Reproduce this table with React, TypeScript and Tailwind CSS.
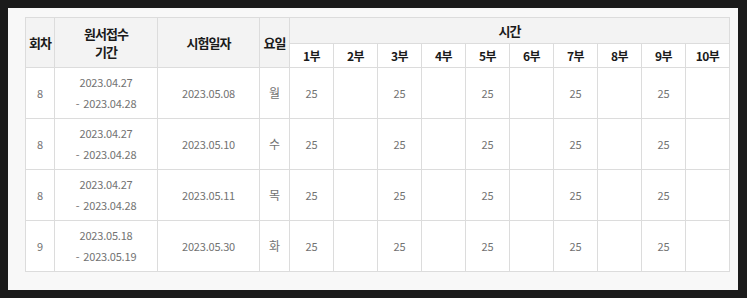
type Row = {
  round: string;
  applyFrom: string;
  applyTo: string;
  examDate: string;
  day: string;
  slots: (number | null)[];
};

const rows: Row[] = [
  { round: "8", applyFrom: "2023.04.27", applyTo: "2023.04.28", examDate: "2023.05.08", day: "월", slots: [25, null, 25, null, 25, null, 25, null, 25, null] },
  { round: "8", applyFrom: "2023.04.27", applyTo: "2023.04.28", examDate: "2023.05.10", day: "수", slots: [25, null, 25, null, 25, null, 25, null, 25, null] },
  { round: "8", applyFrom: "2023.04.27", applyTo: "2023.04.28", examDate: "2023.05.11", day: "목", slots: [25, null, 25, null, 25, null, 25, null, 25, null] },
  { round: "9", applyFrom: "2023.05.18", applyTo: "2023.05.19", examDate: "2023.05.30", day: "화", slots: [25, null, 25, null, 25, null, 25, null, 25, null] },
];

const parts = ["1부", "2부", "3부", "4부", "5부", "6부", "7부", "8부", "9부", "10부"];

const thClass = "border border-[#dcdcdc] bg-[#f3f3f3] p-0 text-center text-[13px] font-bold tracking-[-1px] text-[#1a1a1a]";
const tdClass = "border border-[#dcdcdc] bg-white p-0 text-center text-[11px] font-normal tracking-[-0.2px] text-[#727272]";

export default function App() {
  return (
    <main
      className="min-h-screen bg-[#1b1b1b] pt-2 pl-2"
      style={{ fontFamily: '"Noto Sans CJK KR", "Noto Sans", sans-serif' }}
    >
      <div className="h-[282px] w-[730px] bg-[#f8f8f8] pt-[9px] pl-[17px]">
        <table className="w-[704px] table-fixed border-collapse">
          <colgroup>
            <col className="w-[29px]" />
            <col className="w-[103px]" />
            <col className="w-[102px]" />
            <col className="w-[30px]" />
            {parts.map((p) => (
              <col key={p} className="w-[44px]" />
            ))}
          </colgroup>
          <thead>
            <tr className="h-[26px]">
              <th rowSpan={2} className={thClass}>
                회차
              </th>
              <th rowSpan={2} className={`${thClass} leading-[18px]`}>
                원서접수
                <br />
                기간
              </th>
              <th rowSpan={2} className={thClass}>
                시험일자
              </th>
              <th rowSpan={2} className={thClass}>
                요일
              </th>
              <th colSpan={10} className={thClass}>
                시간
              </th>
            </tr>
            <tr className="h-[24px]">
              {parts.map((p) => (
                <th key={p} className="border border-[#dcdcdc] bg-white p-0 text-center text-[12px] font-bold tracking-[-0.5px] text-[#1a1a1a]">
                  {p}
                </th>
              ))}
            </tr>
          </thead>
          <tbody>
            {rows.map((row, i) => (
              <tr key={i} className="h-[51px]">
                <td className={tdClass}>{row.round}</td>
                <td className={`${tdClass} leading-[21px]`}>
                  {row.applyFrom}
                  <br />
                  <span className="pr-[4px]">-</span>
                  {row.applyTo}
                </td>
                <td className={tdClass}>{row.examDate}</td>
                <td className={`${tdClass} text-[12px]`}>{row.day}</td>
                {row.slots.map((s, j) => (
                  <td key={j} className={tdClass}>
                    {s ?? ""}
                  </td>
                ))}
              </tr>
            ))}
          </tbody>
        </table>
      </div>
    </main>
  );
}
